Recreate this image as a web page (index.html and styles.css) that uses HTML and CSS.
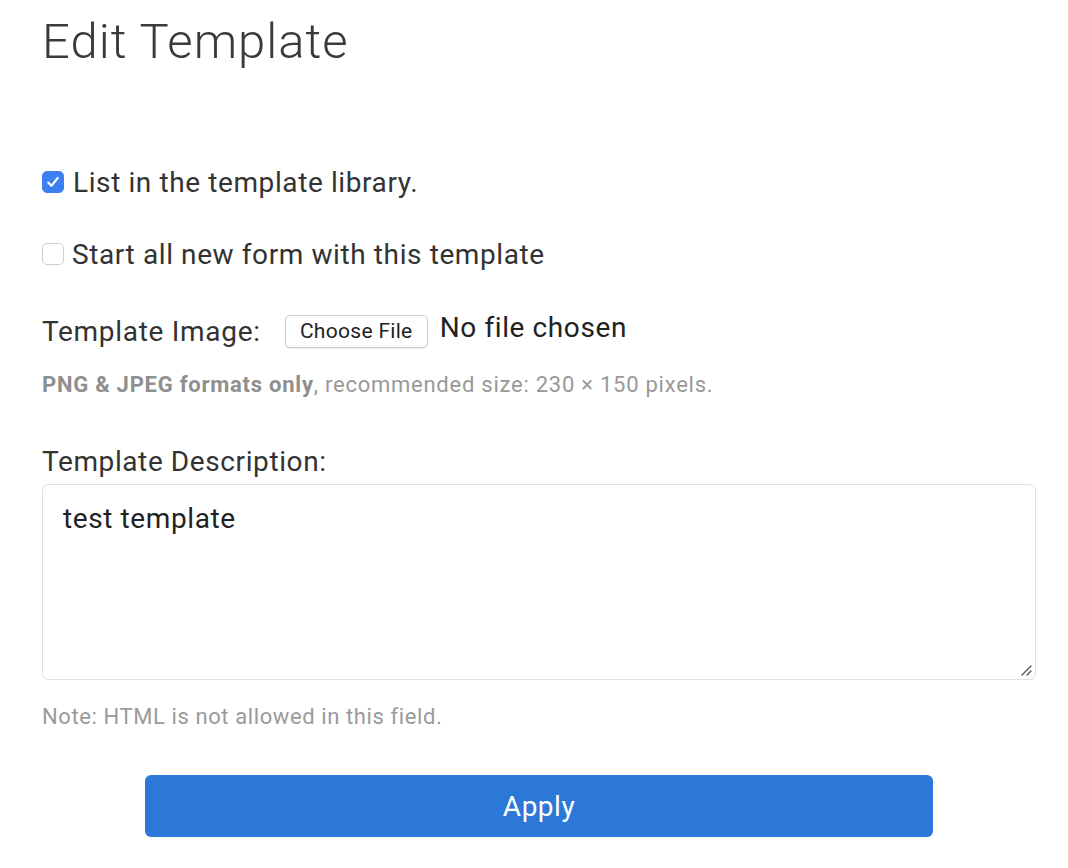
FILE: index.html
```html
<!DOCTYPE html>
<html>
<head>
<meta charset="utf-8">
<link rel="stylesheet" href="styles.css">
</head>
<body>
<div class="page">
  <h1 class="title">Edit Template</h1>
  <div class="check-row first">
    <span class="box checked"><svg viewBox="0 0 22 22" width="22" height="22"><path d="M5.8 11.6 L9.2 15.2 L16.2 6.6" fill="none" stroke="#fff" stroke-width="2.4" stroke-linecap="round" stroke-linejoin="round"/></svg></span>
    <span class="check-label">List in the template library.</span>
  </div>
  <div class="check-row second">
    <span class="box"></span>
    <span class="check-label">Start all new form with this template</span>
  </div>
  <div class="file-row">
    <span class="field-label">Template Image:</span>
    <span class="file-btn">Choose File</span>
    <span class="file-name">No file chosen</span>
  </div>
  <div class="hint"><b>PNG &amp; JPEG formats only</b>, recommended size: 230 × 150 pixels.</div>
  <div class="desc-label">Template Description:</div>
  <div class="textarea">test template
    <svg class="grip" viewBox="0 0 12 12" width="12" height="12"><path d="M2 11 L11 2 M7 11 L11 7" stroke="#555" stroke-width="1.4" stroke-linecap="round"/></svg>
  </div>
  <div class="note">Note: HTML is not allowed in this field.</div>
  <div class="btn-wrap"><div class="apply">Apply</div></div>
</div>
</body>
</html>
```
FILE: styles.css
```css
html, body {
  margin: 0;
  padding: 0;
  background: #fff;
}
.page {
  font-family: Roboto, "Liberation Sans", sans-serif;
  color: #333;
  padding: 0 32px 0 42px;
}
.title {
  margin: 0;
  padding-top: 13px;
  font-size: 49px;
  font-weight: 300;
  color: #3a3a3a;
  line-height: 58px;
  letter-spacing: 1px;
}
.check-row {
  display: flex;
  align-items: center;
  gap: 9px;
  height: 28px;
}
.check-row.first { margin-top: 97px; }
.check-row.second { margin-top: 44px; }
.box {
  width: 22px;
  height: 22px;
  border: 1px solid #cdcdcd;
  border-radius: 5px;
  box-sizing: border-box;
  flex: none;
  display: flex;
  align-items: center;
  justify-content: center;
  background: #fff;
}
.box.checked {
  background: #3b7ff0;
  border-color: #3b7ff0;
}
.box svg { display: block; }
.second .check-label { margin-left: -1px; }
.check-label, .field-label, .file-name, .desc-label {
  font-size: 28px;
  letter-spacing: 0.6px;
  color: #333;
}
.file-row {
  display: flex;
  align-items: center;
  margin-top: 46px;
  height: 34px;
}
.field-label { letter-spacing: 0.7px; }
.file-btn {
  margin-left: 24px;
  width: 143px;
  height: 33px;
  box-sizing: border-box;
  border: 1px solid #cbcbcb;
  border-radius: 5px;
  font-size: 21px;
  letter-spacing: 0.3px;
  display: flex;
  align-items: center;
  justify-content: center;
  color: #222;
  background: #fff;
  box-shadow: 0 1px 1px rgba(0,0,0,0.08);
}
.file-name {
  margin-left: 12px;
  color: #222;
  position: relative;
  top: -4px;
}
.hint {
  margin-top: 24px;
  font-size: 22px;
  letter-spacing: 0.75px;
  color: #999;
}
.hint b { color: #8f8f8f; font-weight: 700; }
.desc-label {
  margin-top: 48px;
}
.textarea {
  position: relative;
  margin-top: 6px;
  height: 196px;
  box-sizing: border-box;
  border: 1px solid #dcdfe4;
  border-radius: 6px;
  padding: 17px 20px;
  font-size: 28px;
  letter-spacing: 0.6px;
  color: #222;
}
.grip {
  position: absolute;
  right: 3px;
  bottom: 3px;
}
.note {
  margin-top: 24px;
  font-size: 22px;
  letter-spacing: 0.6px;
  color: #9a9a9a;
}
.btn-wrap {
  display: flex;
  justify-content: center;
  margin-top: 46px;
}
.apply {
  width: 788px;
  height: 62px;
  background: #2b78d9;
  border-radius: 6px;
  color: #fff;
  font-size: 28px;
  letter-spacing: 0.5px;
  display: flex;
  align-items: center;
  justify-content: center;
}
```
